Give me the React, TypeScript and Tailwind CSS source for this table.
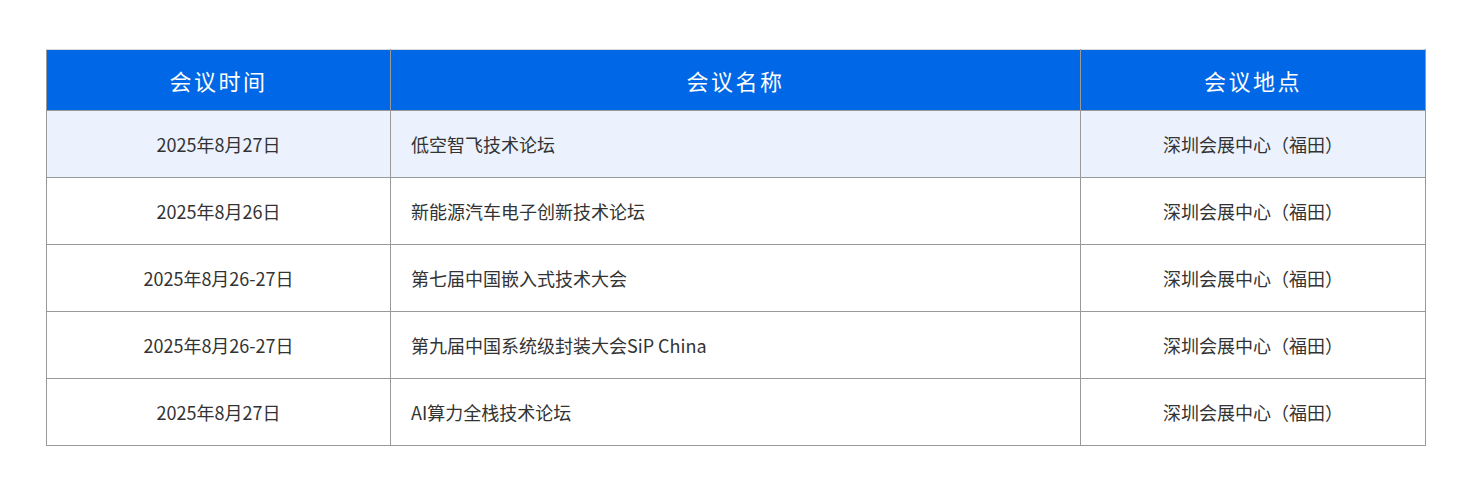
const rows = [
  { date: "2025年8月27日", name: "低空智飞技术论坛", place: "深圳会展中心（福田）" },
  { date: "2025年8月26日", name: "新能源汽车电子创新技术论坛", place: "深圳会展中心（福田）" },
  { date: "2025年8月26-27日", name: "第七届中国嵌入式技术大会", place: "深圳会展中心（福田）" },
  { date: "2025年8月26-27日", name: "第九届中国系统级封装大会SiP China", place: "深圳会展中心（福田）" },
  { date: "2025年8月27日", name: "AI算力全栈技术论坛", place: "深圳会展中心（福田）" },
];

export default function App() {
  return (
    <div className="min-h-screen bg-white pt-[49px] pl-[46px] font-['Noto_Sans_CJK_SC','Noto_Sans',sans-serif]">
      <table className="w-[1379px] border-collapse table-fixed">
        <colgroup>
          <col className="w-[344px]" />
          <col className="w-[690px]" />
          <col className="w-[345px]" />
        </colgroup>
        <thead>
          <tr className="bg-[#0068e6] text-white text-[22px] tracking-[2.5px]">
            <th className="h-[61px] border border-[#999] border-t-[#d9d9d9] font-normal">会议时间</th>
            <th className="h-[61px] border border-[#999] border-t-[#d9d9d9] font-normal">会议名称</th>
            <th className="h-[61px] border border-[#999] border-t-[#d9d9d9] font-normal">会议地点</th>
          </tr>
        </thead>
        <tbody className="text-[18px] text-[#333]">
          {rows.map((r, i) => (
            <tr key={i} className={i === 0 ? "bg-[#ebf2fd]" : "bg-white"}>
              <td className="h-[67px] border border-[#999] text-center">{r.date}</td>
              <td className="h-[67px] border border-[#999] pl-[20px]">{r.name}</td>
              <td className="h-[67px] border border-[#999] text-center">{r.place}</td>
            </tr>
          ))}
        </tbody>
      </table>
    </div>
  );
}
